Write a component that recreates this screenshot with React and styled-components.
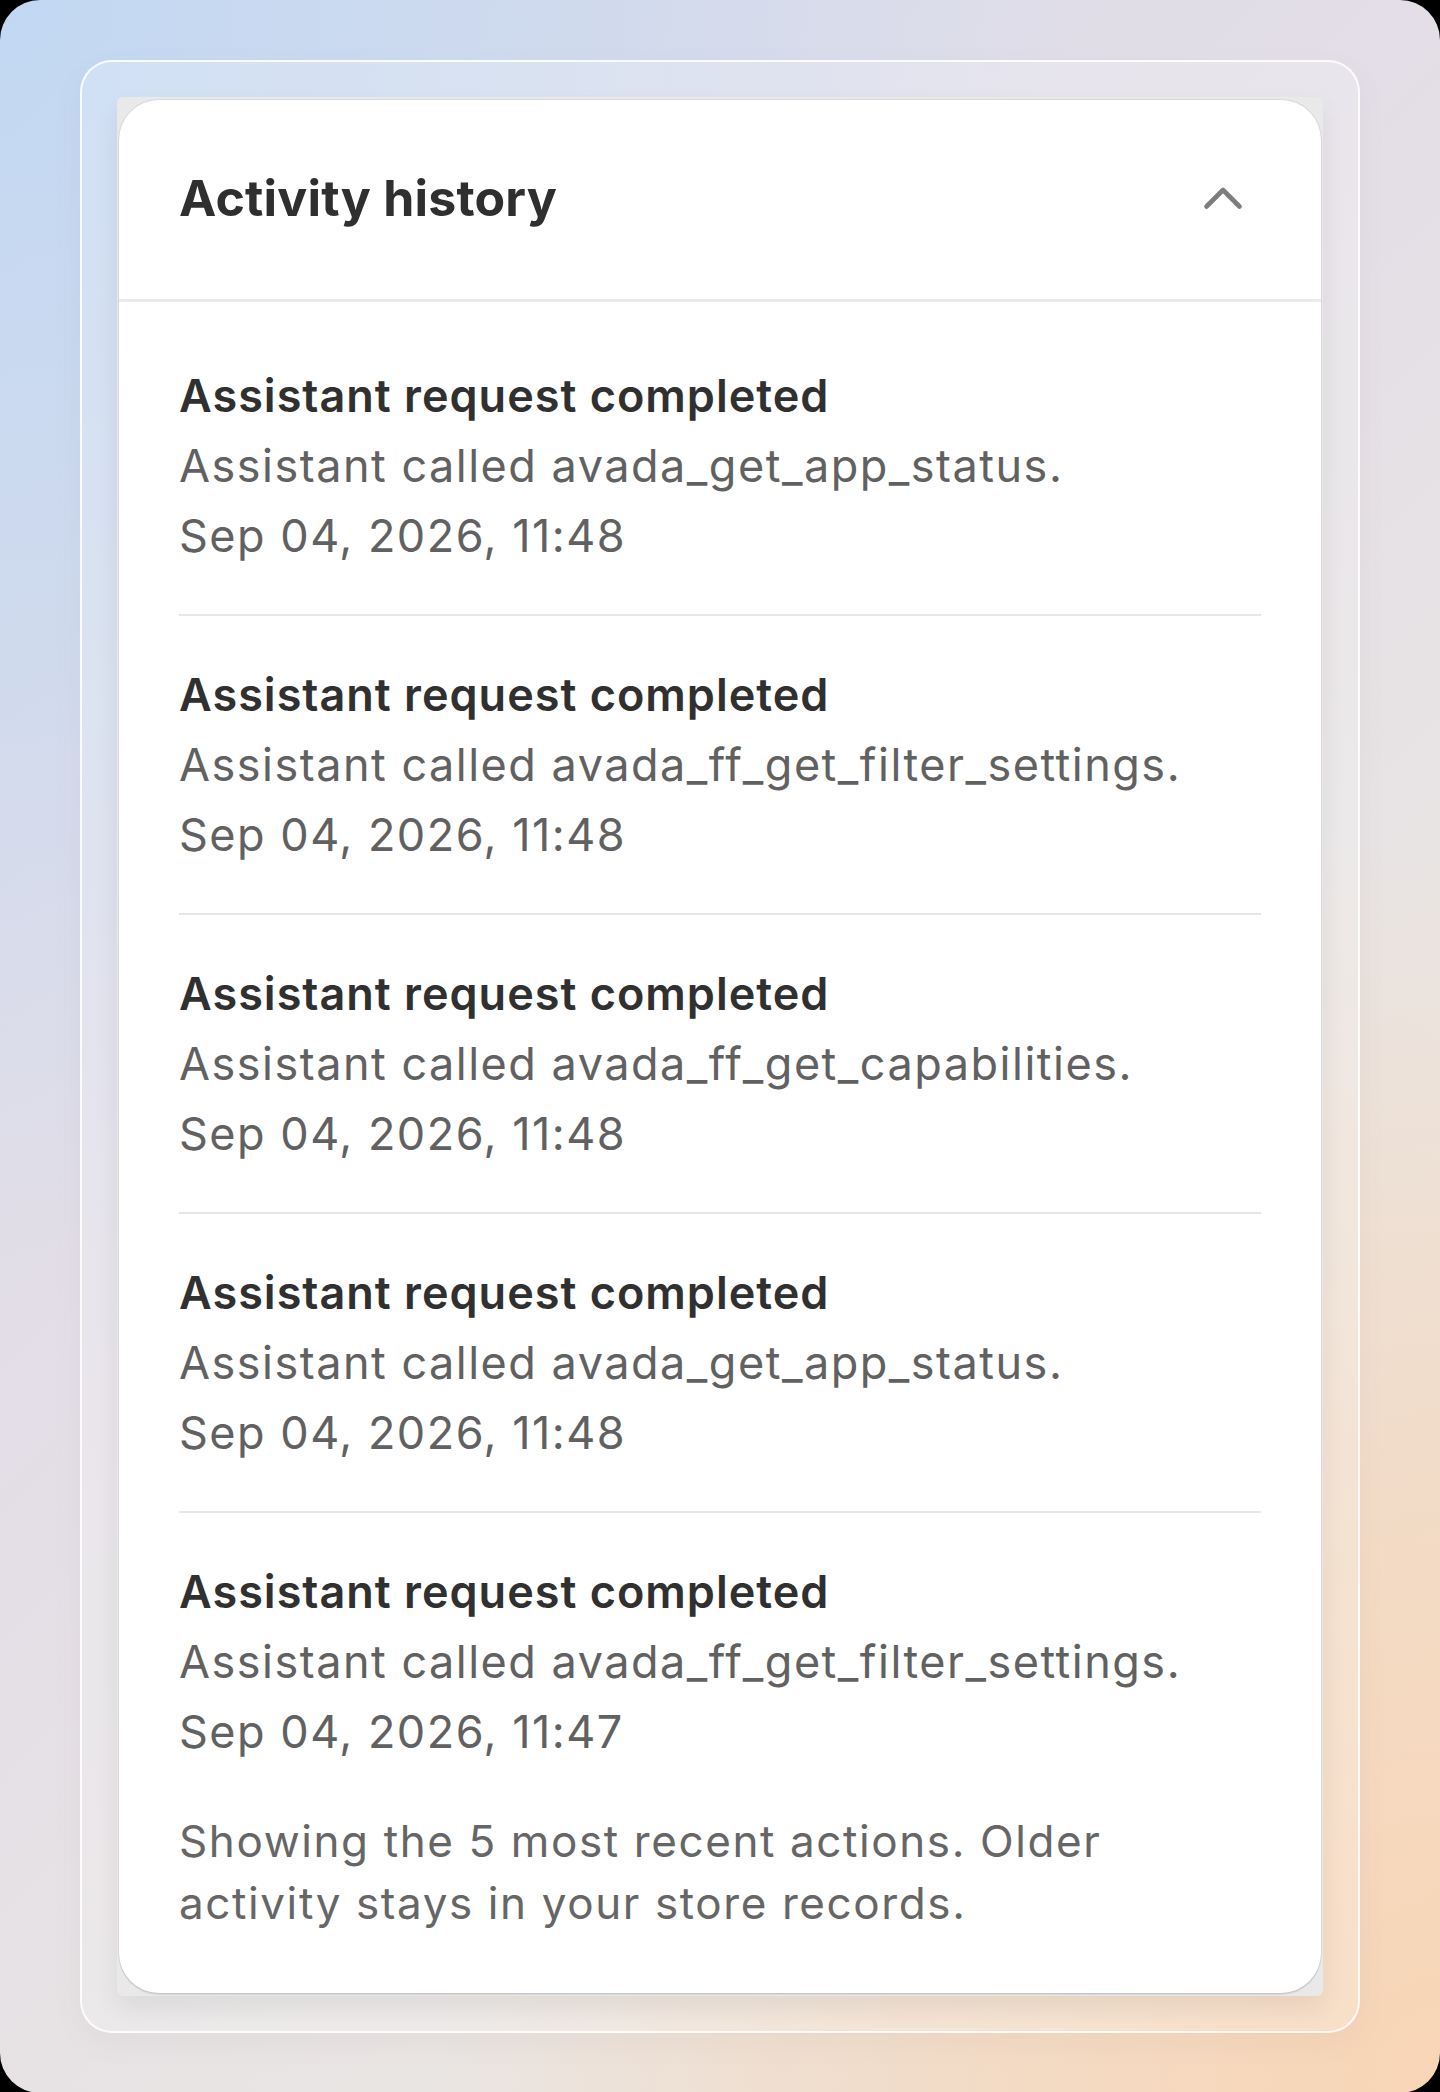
import React from 'react'
import styled, { createGlobalStyle } from 'styled-components'

const GlobalStyle = createGlobalStyle`
    html, body {
        margin: 0;
        padding: 0;
        background: #000;
    }
    * {
        box-sizing: border-box;
    }
`

const activities = [
    { tool: 'avada_get_app_status', time: 'Sep 04, 2026, 11:48' },
    { tool: 'avada_ff_get_filter_settings', time: 'Sep 04, 2026, 11:48' },
    { tool: 'avada_ff_get_capabilities', time: 'Sep 04, 2026, 11:48' },
    { tool: 'avada_get_app_status', time: 'Sep 04, 2026, 11:48' },
    { tool: 'avada_ff_get_filter_settings', time: 'Sep 04, 2026, 11:47' },
]

const ChevronUp = () => (
    <svg width="40" height="26" viewBox="0 0 40 26" fill="none">
        <polyline
            points="3.5,21.5 20,5 36.5,21.5"
            stroke="#7d7d7d"
            strokeWidth="4.6"
            strokeLinecap="round"
            strokeLinejoin="round"
        />
    </svg>
)

const App = () => (
    <>
        <GlobalStyle />
        <Page>
            <Frame>
                <CardBackdrop>
                    <Card>
                        <Header>
                            <HeaderTitle>Activity history</HeaderTitle>
                            <ToggleButton aria-label="Collapse">
                                <ChevronUp />
                            </ToggleButton>
                        </Header>
                        <List>
                            {activities.map((item, i) => (
                                <Item key={i} last={i === activities.length - 1}>
                                    <ItemTitle>Assistant request completed</ItemTitle>
                                    <ItemText>Assistant called {item.tool}.</ItemText>
                                    <ItemText>{item.time}</ItemText>
                                </Item>
                            ))}
                            <Footnote>
                                Showing the 5 most recent actions. Older
                                <br />
                                activity stays in your store records.
                            </Footnote>
                        </List>
                    </Card>
                </CardBackdrop>
            </Frame>
        </Page>
    </>
)

const Page = styled.div`
    min-height: 100vh;
    padding: 60px 80px 60px;
    border-radius: 40px;
    background:
        radial-gradient(ellipse 75% 60% at 0% 0%, #c2d8f2 0%, rgba(194, 216, 242, 0.55) 45%, rgba(194, 216, 242, 0) 100%),
        radial-gradient(ellipse 70% 60% at 100% 100%, #f8d5b5 0%, rgba(248, 213, 181, 0.6) 45%, rgba(248, 213, 181, 0) 100%),
        linear-gradient(135deg, #d8dbec 0%, #e3dee7 40%, #e9e5e3 70%, #ede4dc 100%);
    font-family: Inter, "Noto Sans", sans-serif;
`

const Frame = styled.div`
    padding: 35px;
    border-radius: 32px;
    border: 2px solid rgba(255, 255, 255, 0.85);
    background: rgba(255, 255, 255, 0.22);
    box-shadow: 0 10px 30px rgba(120, 110, 110, 0.06);
`

const CardBackdrop = styled.div`
    padding: 3px 2px;
    border-radius: 6px;
    background: #e9e9ea;
    box-shadow: 0 12px 26px rgba(0, 0, 0, 0.07);
`

const Card = styled.div`
    background: #fff;
    border-radius: 40px;
    box-shadow: 0 0 0 1px rgba(0, 0, 0, 0.07), 0 2px 1px rgba(0, 0, 0, 0.08);
    overflow: hidden;
`

const Header = styled.div`
    display: flex;
    align-items: center;
    justify-content: space-between;
    height: 202px;
    padding: 0 60px 4px;
    border-bottom: 3px solid #ebebeb;
`

const HeaderTitle = styled.h2`
    margin: 0;
    font-size: 50px;
    font-weight: 700;
    color: #2f2f2f;
    letter-spacing: 0.2px;
`

const ToggleButton = styled.button`
    display: flex;
    align-items: center;
    justify-content: center;
    padding: 0;
    margin-right: 18px;
    border: none;
    background: none;
`

const List = styled.div`
    display: flex;
    flex-direction: column;
    padding: 15px 60px 59px;
`

const Item = styled.div`
    display: flex;
    flex-direction: column;
    padding: 44px 0 43px;
    border-bottom: ${p => (p.last ? 'none' : '2px solid #e6e6e6')};
`

const ItemTitle = styled.div`
    font-size: 45px;
    line-height: 70px;
    font-weight: 600;
    letter-spacing: 1px;
    color: #303030;
`

const ItemText = styled.div`
    font-size: 45px;
    line-height: 70px;
    font-weight: 400;
    letter-spacing: 1.5px;
    color: #616161;
`

const Footnote = styled.p`
    margin: 0;
    font-size: 44px;
    line-height: 62px;
    letter-spacing: 1.6px;
    color: #666;
`

export default App
